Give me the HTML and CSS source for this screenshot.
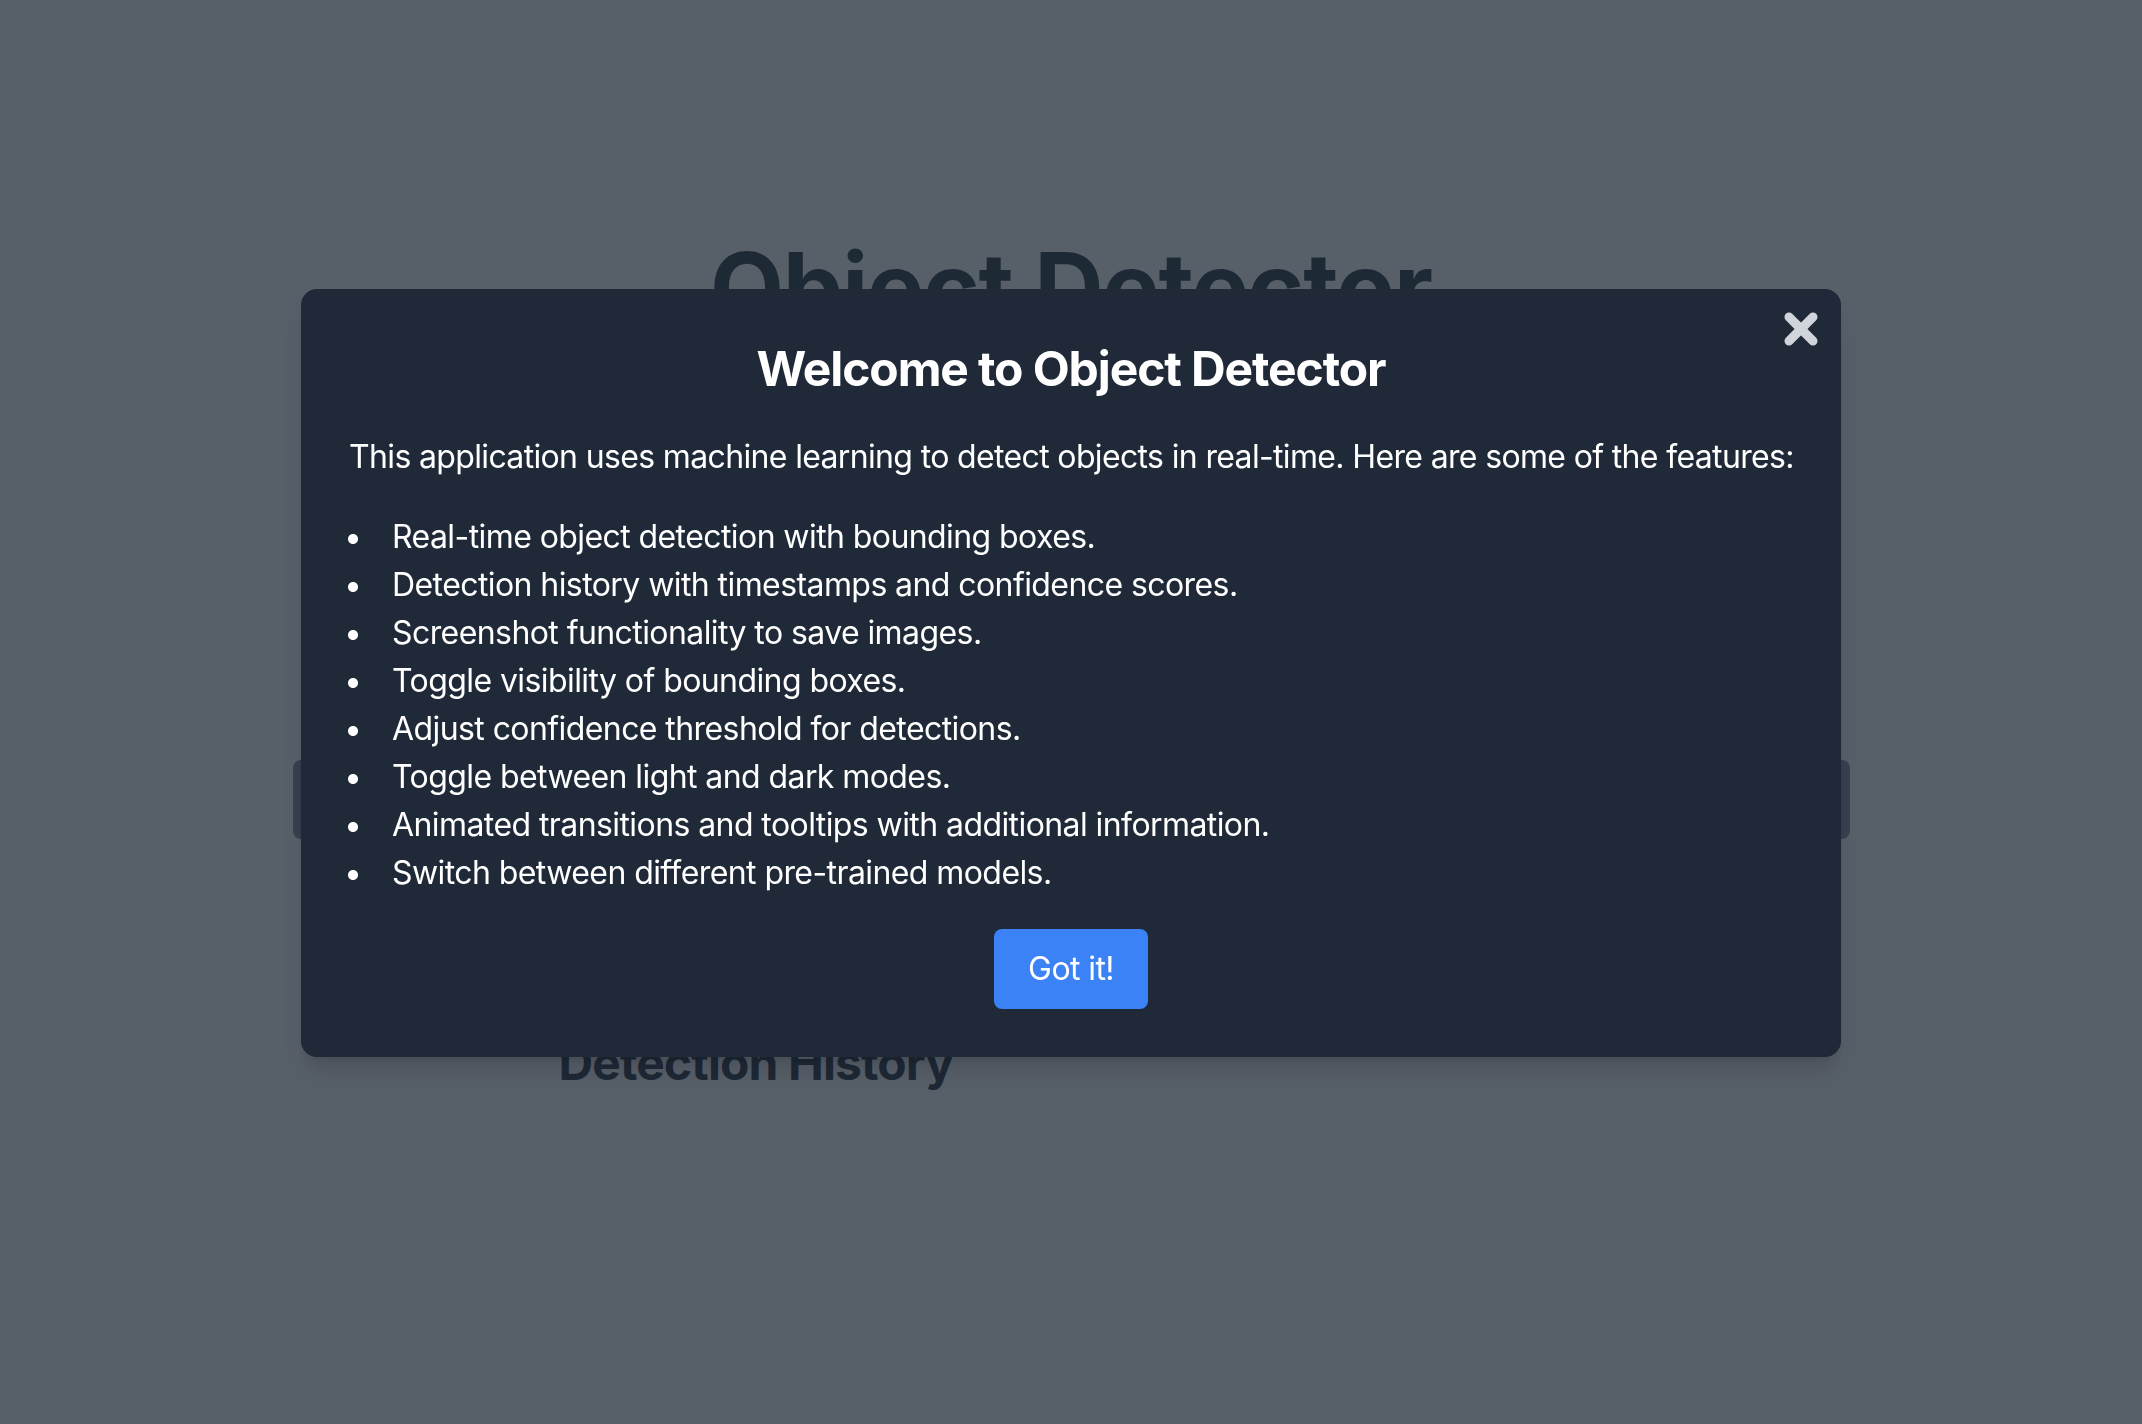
FILE: index.html
```html
<!DOCTYPE html>
<html lang="en">
<head>
<meta charset="utf-8">
<title>Object Detector</title>
<link rel="stylesheet" href="styles.css">
</head>
<body>
<main class="page">
  <h1 class="app-title">Object Detector</h1>
  <div class="controls"></div>
  <section class="history">
    <h2 class="history-title">Detection History</h2>
  </section>
</main>

<div class="overlay">
  <div class="modal" role="dialog" aria-labelledby="welcome-title">
    <button class="close-btn" aria-label="Close">
      <svg viewBox="0 0 34 34" width="34" height="34" aria-hidden="true">
        <line x1="5" y1="5" x2="29" y2="29"/>
        <line x1="29" y1="5" x2="5" y2="29"/>
      </svg>
    </button>
    <h2 class="modal-title" id="welcome-title">Welcome to Object Detector</h2>
    <p class="modal-intro">This application uses machine learning to detect objects in real-time. Here are some of the features:</p>
    <ul class="feature-list">
      <li>Real-time object detection with bounding boxes.</li>
      <li>Detection history with timestamps and confidence scores.</li>
      <li>Screenshot functionality to save images.</li>
      <li>Toggle visibility of bounding boxes.</li>
      <li>Adjust confidence threshold for detections.</li>
      <li>Toggle between light and dark modes.</li>
      <li>Animated transitions and tooltips with additional information.</li>
      <li>Switch between different pre-trained models.</li>
    </ul>
    <div class="modal-actions">
      <button class="primary-btn">Got it!</button>
    </div>
  </div>
</div>
</body>
</html>
```

FILE: styles.css
```css
* {
  box-sizing: border-box;
}

html, body {
  margin: 0;
  padding: 0;
  height: 100%;
}

body {
  background: #ffffff;
  color: #1f2937;
  font-family: Inter, "Noto Sans", sans-serif;
  overflow: hidden;
}

.page {
  width: 1557px;
  margin: 0 auto;
  padding-top: 239px;
}

.app-title {
  margin: 0 0 425px;
  font-size: 96px;
  line-height: 96px;
  font-weight: 700;
  letter-spacing: -1.1px;
  text-align: center;
  color: #1f2937;
}

.controls {
  height: 79px;
  border-radius: 8px;
  background: #80849a;
}

.history {
  margin-top: 200px;
  padding-left: 266px;
}

.history-title {
  margin: 0;
  font-size: 48px;
  line-height: 48px;
  font-weight: 700;
  letter-spacing: -0.9px;
  color: #1f2937;
}

.overlay {
  position: fixed;
  inset: 0;
  background: rgba(31, 41, 55, 0.75);
  display: flex;
  justify-content: center;
  align-items: flex-start;
  padding-top: 289px;
}

.modal {
  position: relative;
  width: 1540px;
  padding: 48px;
  background: #1f2937;
  border-radius: 16px;
  color: #ffffff;
  box-shadow: 0 20px 25px -5px rgba(0, 0, 0, 0.12), 0 8px 10px -6px rgba(0, 0, 0, 0.12);
}

.close-btn {
  position: absolute;
  top: 23px;
  right: 23px;
  width: 34px;
  height: 34px;
  padding: 0;
  border: 0;
  background: transparent;
  cursor: pointer;
}

.close-btn svg {
  display: block;
  stroke: #d1d5db;
  stroke-width: 9;
  stroke-linecap: round;
}

.modal-title {
  margin: 0 0 32px;
  font-size: 48px;
  line-height: 64px;
  font-weight: 700;
  letter-spacing: -1.1px;
  text-align: center;
  color: #ffffff;
}

.modal-intro {
  margin: 0 0 32px;
  font-size: 32px;
  line-height: 48px;
  letter-spacing: -0.65px;
  white-space: nowrap;
}

.feature-list {
  margin: 0 0 32px;
  padding: 0;
  list-style: none;
  font-size: 32px;
  line-height: 48px;
  letter-spacing: -0.58px;
}

.feature-list li::before {
  content: "\2022";
  display: inline-block;
  width: 48px;
  margin-left: -5px;
}

.modal-actions {
  display: flex;
  justify-content: center;
}

.primary-btn {
  padding: 16px 34px;
  border: 0;
  border-radius: 8px;
  background: #3b82f6;
  color: #ffffff;
  font-family: inherit;
  font-size: 32px;
  line-height: 48px;
  letter-spacing: -0.6px;
  cursor: pointer;
}
```
